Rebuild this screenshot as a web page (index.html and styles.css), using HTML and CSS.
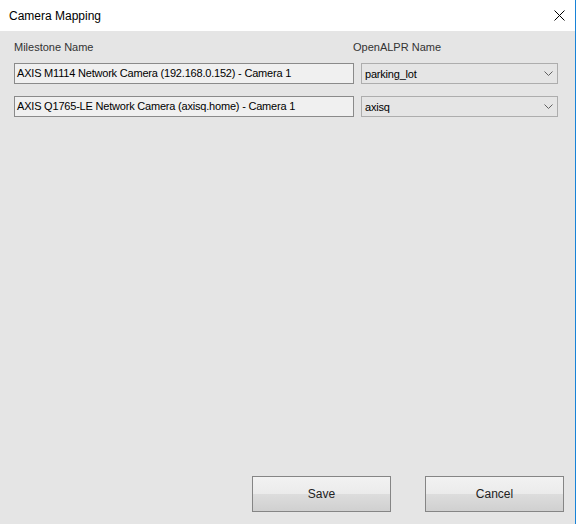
FILE: index.html
```html
<!DOCTYPE html>
<html>
<head>
<meta charset="utf-8">
<link rel="stylesheet" href="styles.css">
</head>
<body>
<div class="window">
  <div class="titlebar">
    <span class="title">Camera Mapping</span>
    <span class="close">
      <svg width="11" height="11" viewBox="0 0 11 11"><path d="M0.5 0.5 L10.5 10.5 M10.5 0.5 L0.5 10.5" stroke="#000" stroke-width="1" fill="none"/></svg>
    </span>
  </div>
  <div class="content">
    <div class="grid">
      <div class="label">Milestone Name</div>
      <div class="label label-right">OpenALPR Name</div>
      <div class="textbox">AXIS M1114 Network Camera (192.168.0.152) - Camera 1</div>
      <div class="combo"><span>parking_lot</span>
        <svg width="9" height="5" viewBox="0 0 9 5"><path d="M0.5 0.5 L4.5 4.5 L8.5 0.5" stroke="#606060" stroke-width="1" fill="none"/></svg>
      </div>
      <div class="textbox">AXIS Q1765-LE Network Camera (axisq.home) - Camera 1</div>
      <div class="combo"><span>axisq</span>
        <svg width="9" height="5" viewBox="0 0 9 5"><path d="M0.5 0.5 L4.5 4.5 L8.5 0.5" stroke="#606060" stroke-width="1" fill="none"/></svg>
      </div>
    </div>
    <div class="buttons">
      <button class="btn">Save</button>
      <button class="btn">Cancel</button>
    </div>
  </div>
</div>
</body>
</html>
```
FILE: styles.css
```css
html, body {
  margin: 0;
  padding: 0;
  background: #ffffff;
}
body {
  font-family: "Liberation Sans", Arial, sans-serif;
  width: 577px;
  height: 524px;
  overflow: hidden;
}
.window {
  width: 575px;
  height: 524px;
  border-right: 1px solid #1883d7;
  display: flex;
  flex-direction: column;
}
.titlebar {
  height: 31px;
  flex: none;
  background: #ffffff;
  display: flex;
  align-items: center;
  justify-content: space-between;
  padding-left: 9px;
  padding-right: 10px;
}
.title {
  font-size: 12px;
  color: #000;
}
.close {
  display: flex;
  margin-top: 0;
}
.content {
  flex: 1;
  background: #e5e5e5;
  display: flex;
  flex-direction: column;
  justify-content: space-between;
  padding: 10px 11px 12px 14px;
}
.grid {
  display: grid;
  grid-template-columns: 340px 197px;
  column-gap: 7px;
  row-gap: 12px;
}
.label {
  font-size: 11px;
  line-height: 13px;
  color: #333;
  margin-bottom: -3px;
}
.label-right {
  margin-left: -8px;
}
.textbox {
  box-sizing: border-box;
  height: 21px;
  border: 1px solid #8a8a8a;
  background: #f0f0f0;
  font-size: 11px;
  letter-spacing: -0.2px;
  line-height: 19px;
  padding-left: 2px;
  color: #000;
  white-space: nowrap;
}
.combo {
  box-sizing: border-box;
  height: 21px;
  border: 1px solid #adadad;
  background: #e5e5e5;
  font-size: 11px;
  letter-spacing: -0.2px;
  color: #000;
  display: flex;
  align-items: center;
  justify-content: space-between;
  padding-left: 3px;
  padding-right: 4px;
}
.buttons {
  display: flex;
  justify-content: flex-end;
  gap: 34px;
}
.btn {
  box-sizing: border-box;
  width: 139px;
  height: 36px;
  border: 1px solid #858585;
  background: linear-gradient(#f2f2f2 0%, #ebebeb 50%, #dddddd 50%, #d0d0d0 100%);
  font-family: "Liberation Sans", Arial, sans-serif;
  font-size: 12px;
  color: #222;
  padding: 0;
  margin: 0;
}
```
